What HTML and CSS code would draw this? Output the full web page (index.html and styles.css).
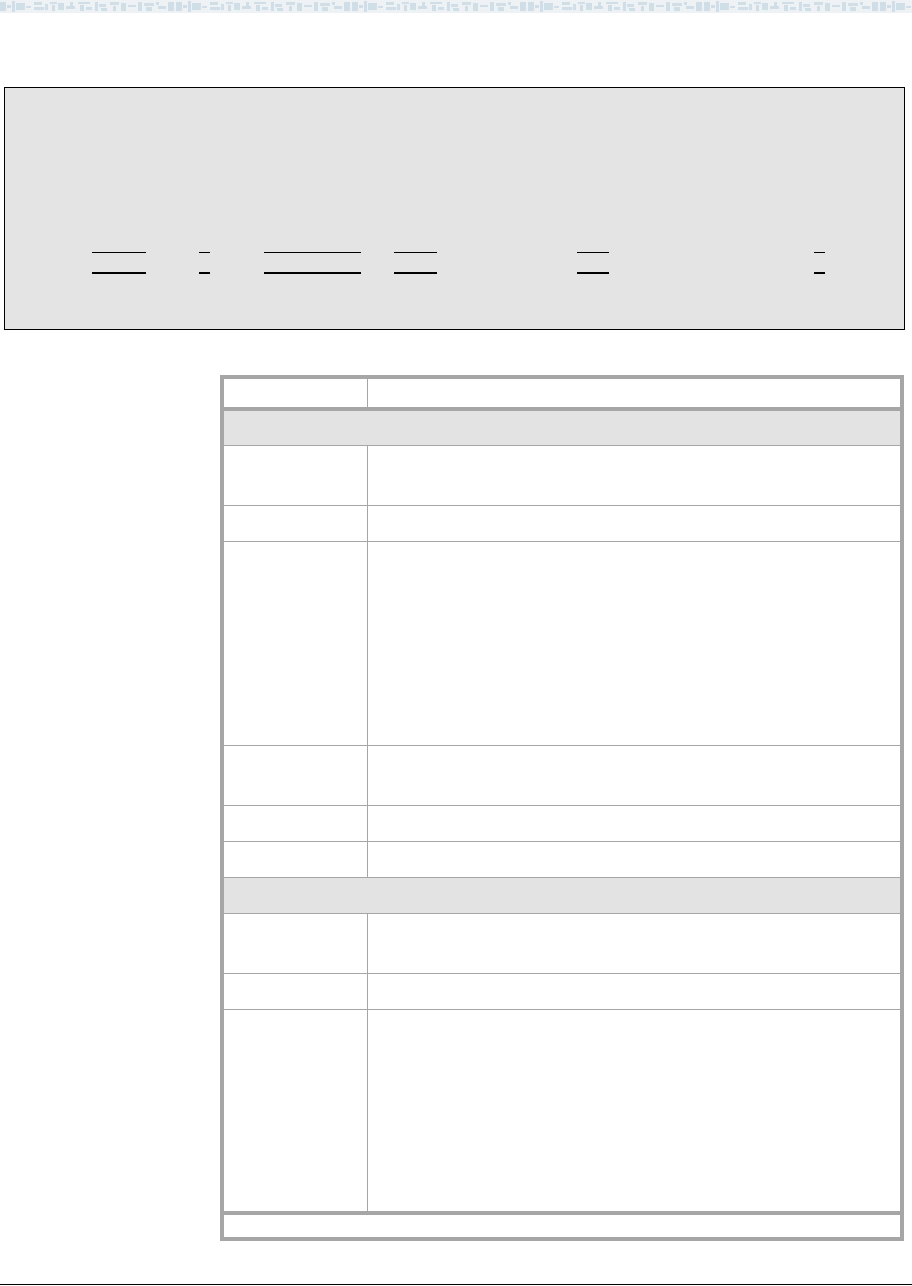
FILE: index.html
```html
<!DOCTYPE html>
<html>
<head>
<meta charset="utf-8">
<title>Document page</title>
<link rel="stylesheet" href="styles.css">
</head>
<body>
<div class="page">
  <header class="strip">
    <svg width="912" height="13" viewBox="0 0 912 13" aria-hidden="true">
      <defs>
        <pattern id="band" x="0" y="0" width="176" height="13" patternUnits="userSpaceOnUse">
          <rect x="0" y="2" width="6" height="9" fill="#cfdee7"/>
          <rect x="7" y="5" width="4" height="3" fill="#cfdee7"/>
          <rect x="12" y="1" width="3" height="11" fill="#cfdee7"/>
          <rect x="16" y="3" width="9" height="7" fill="#cfdee7"/>
          <rect x="26" y="6" width="5" height="2" fill="#cfdee7"/>
          <rect x="34" y="2" width="8" height="3" fill="#cfdee7"/>
          <rect x="34" y="7" width="10" height="3" fill="#cfdee7"/>
          <rect x="45" y="4" width="3" height="6" fill="#cfdee7"/>
          <rect x="50" y="2" width="7" height="2" fill="#cfdee7"/>
          <rect x="52" y="5" width="3" height="6" fill="#cfdee7"/>
          <rect x="58" y="3" width="6" height="7" fill="#cfdee7"/>
          <rect x="66" y="6" width="9" height="3" fill="#cfdee7"/>
          <rect x="70" y="2" width="3" height="4" fill="#cfdee7"/>
          <rect x="78" y="2" width="12" height="2" fill="#cfdee7"/>
          <rect x="80" y="5" width="4" height="6" fill="#cfdee7"/>
          <rect x="86" y="7" width="6" height="3" fill="#cfdee7"/>
          <rect x="95" y="2" width="3" height="9" fill="#cfdee7"/>
          <rect x="99" y="4" width="7" height="3" fill="#cfdee7"/>
          <rect x="101" y="8" width="6" height="3" fill="#cfdee7"/>
          <rect x="110" y="2" width="9" height="3" fill="#cfdee7"/>
          <rect x="113" y="6" width="3" height="5" fill="#cfdee7"/>
          <rect x="121" y="3" width="5" height="8" fill="#cfdee7"/>
          <rect x="128" y="5" width="8" height="2" fill="#cfdee7"/>
          <rect x="138" y="2" width="4" height="9" fill="#cfdee7"/>
          <rect x="144" y="3" width="10" height="3" fill="#cfdee7"/>
          <rect x="146" y="7" width="6" height="4" fill="#cfdee7"/>
          <rect x="156" y="2" width="3" height="3" fill="#cfdee7"/>
          <rect x="158" y="6" width="8" height="3" fill="#cfdee7"/>
          <rect x="168" y="2" width="6" height="9" fill="#cfdee7"/>
        </pattern>
      </defs>
      <rect x="0" y="0" width="912" height="13" fill="#eef2f5"/>
      <rect x="0" y="0" width="912" height="12" fill="url(#band)"/>
    </svg>
  </header>

  <section class="banner">
    <div class="links links-top">
      <span class="seg s1"></span><span class="seg s2"></span><span class="seg s3"></span><span class="seg s4"></span><span class="seg s5"></span><span class="seg s6"></span>
    </div>
    <div class="links links-bottom">
      <span class="seg s1"></span><span class="seg s2"></span><span class="seg s3"></span><span class="seg s4"></span><span class="seg s5"></span><span class="seg s6"></span>
    </div>
  </section>

  <section class="grid-table">
    <div class="row head"><div class="c1"></div><div class="c2"></div></div>
    <div class="row section"></div>
    <div class="row h2"><div class="c1"></div><div class="c2"></div></div>
    <div class="row h1"><div class="c1"></div><div class="c2"></div></div>
    <div class="row h8"><div class="c1"></div><div class="c2"></div></div>
    <div class="row h2"><div class="c1"></div><div class="c2"></div></div>
    <div class="row h1"><div class="c1"></div><div class="c2"></div></div>
    <div class="row h1"><div class="c1"></div><div class="c2"></div></div>
    <div class="row section s-second"></div>
    <div class="row h2"><div class="c1"></div><div class="c2"></div></div>
    <div class="row h1"><div class="c1"></div><div class="c2"></div></div>
    <div class="row h8 last"><div class="c1"></div><div class="c2"></div></div>
    <div class="row foot"></div>
  </section>

  <footer class="rule"></footer>
</div>
</body>
</html>
```

FILE: styles.css
```css
* { box-sizing: border-box; }

html, body {
  margin: 0;
  padding: 0;
  background: #ffffff;
  font-family: "Liberation Sans", Arial, sans-serif;
}

.page {
  width: 912px;
  height: 1286px;
  display: flex;
  flex-direction: column;
}

.strip {
  height: 13px;
  line-height: 0;
}

.strip svg { display: block; }

.banner {
  margin: 74px 0 0 4px;
  width: 901px;
  height: 243px;
  background: #e4e4e4;
  border: 1px solid #000000;
  padding: 164px 0 0 83px;
  display: flex;
  flex-direction: column;
  gap: 19px;
}

.links {
  display: flex;
}

.links-top .seg { height: 1px; background: #000; }
.links-bottom .seg { height: 2px; background: #000; }

.seg.s1 { width: 54px; margin-left: 4px; }
.seg.s2 { width: 11px; margin-left: 53px; }
.seg.s3 { width: 97px; margin-left: 54px; }
.seg.s4 { width: 43px; margin-left: 33px; }
.seg.s5 { width: 32px; margin-left: 140px; }
.seg.s6 { width: 11px; margin-left: 205px; }

.grid-table {
  margin: 45px 0 0 220px;
  width: 684px;
  border: 4px solid #a6a6a6;
  display: flex;
  flex-direction: column;
}

.row {
  display: flex;
  border-bottom: 1px solid #a6a6a6;
}

.row .c1 {
  width: 144px;
  border-right: 1px solid #a6a6a6;
}

.row .c2 { flex: 1; }

.row.head {
  height: 32px;
  border-bottom: 4px solid #a6a6a6;
}

.row.section {
  height: 35px;
  background: #e3e3e3;
}

.row.s-second { height: 36px; }

.row.h1 { height: 36px; }
.row.h2 { height: 60px; }
.row.h8 { height: 204px; }

.row.last {
  height: 205px;
  border-bottom: 4px solid #a6a6a6;
}

.row.foot {
  height: 22px;
  border-bottom: none;
}

.rule {
  margin-top: 43px;
  height: 1px;
  background: #000000;
}
```
